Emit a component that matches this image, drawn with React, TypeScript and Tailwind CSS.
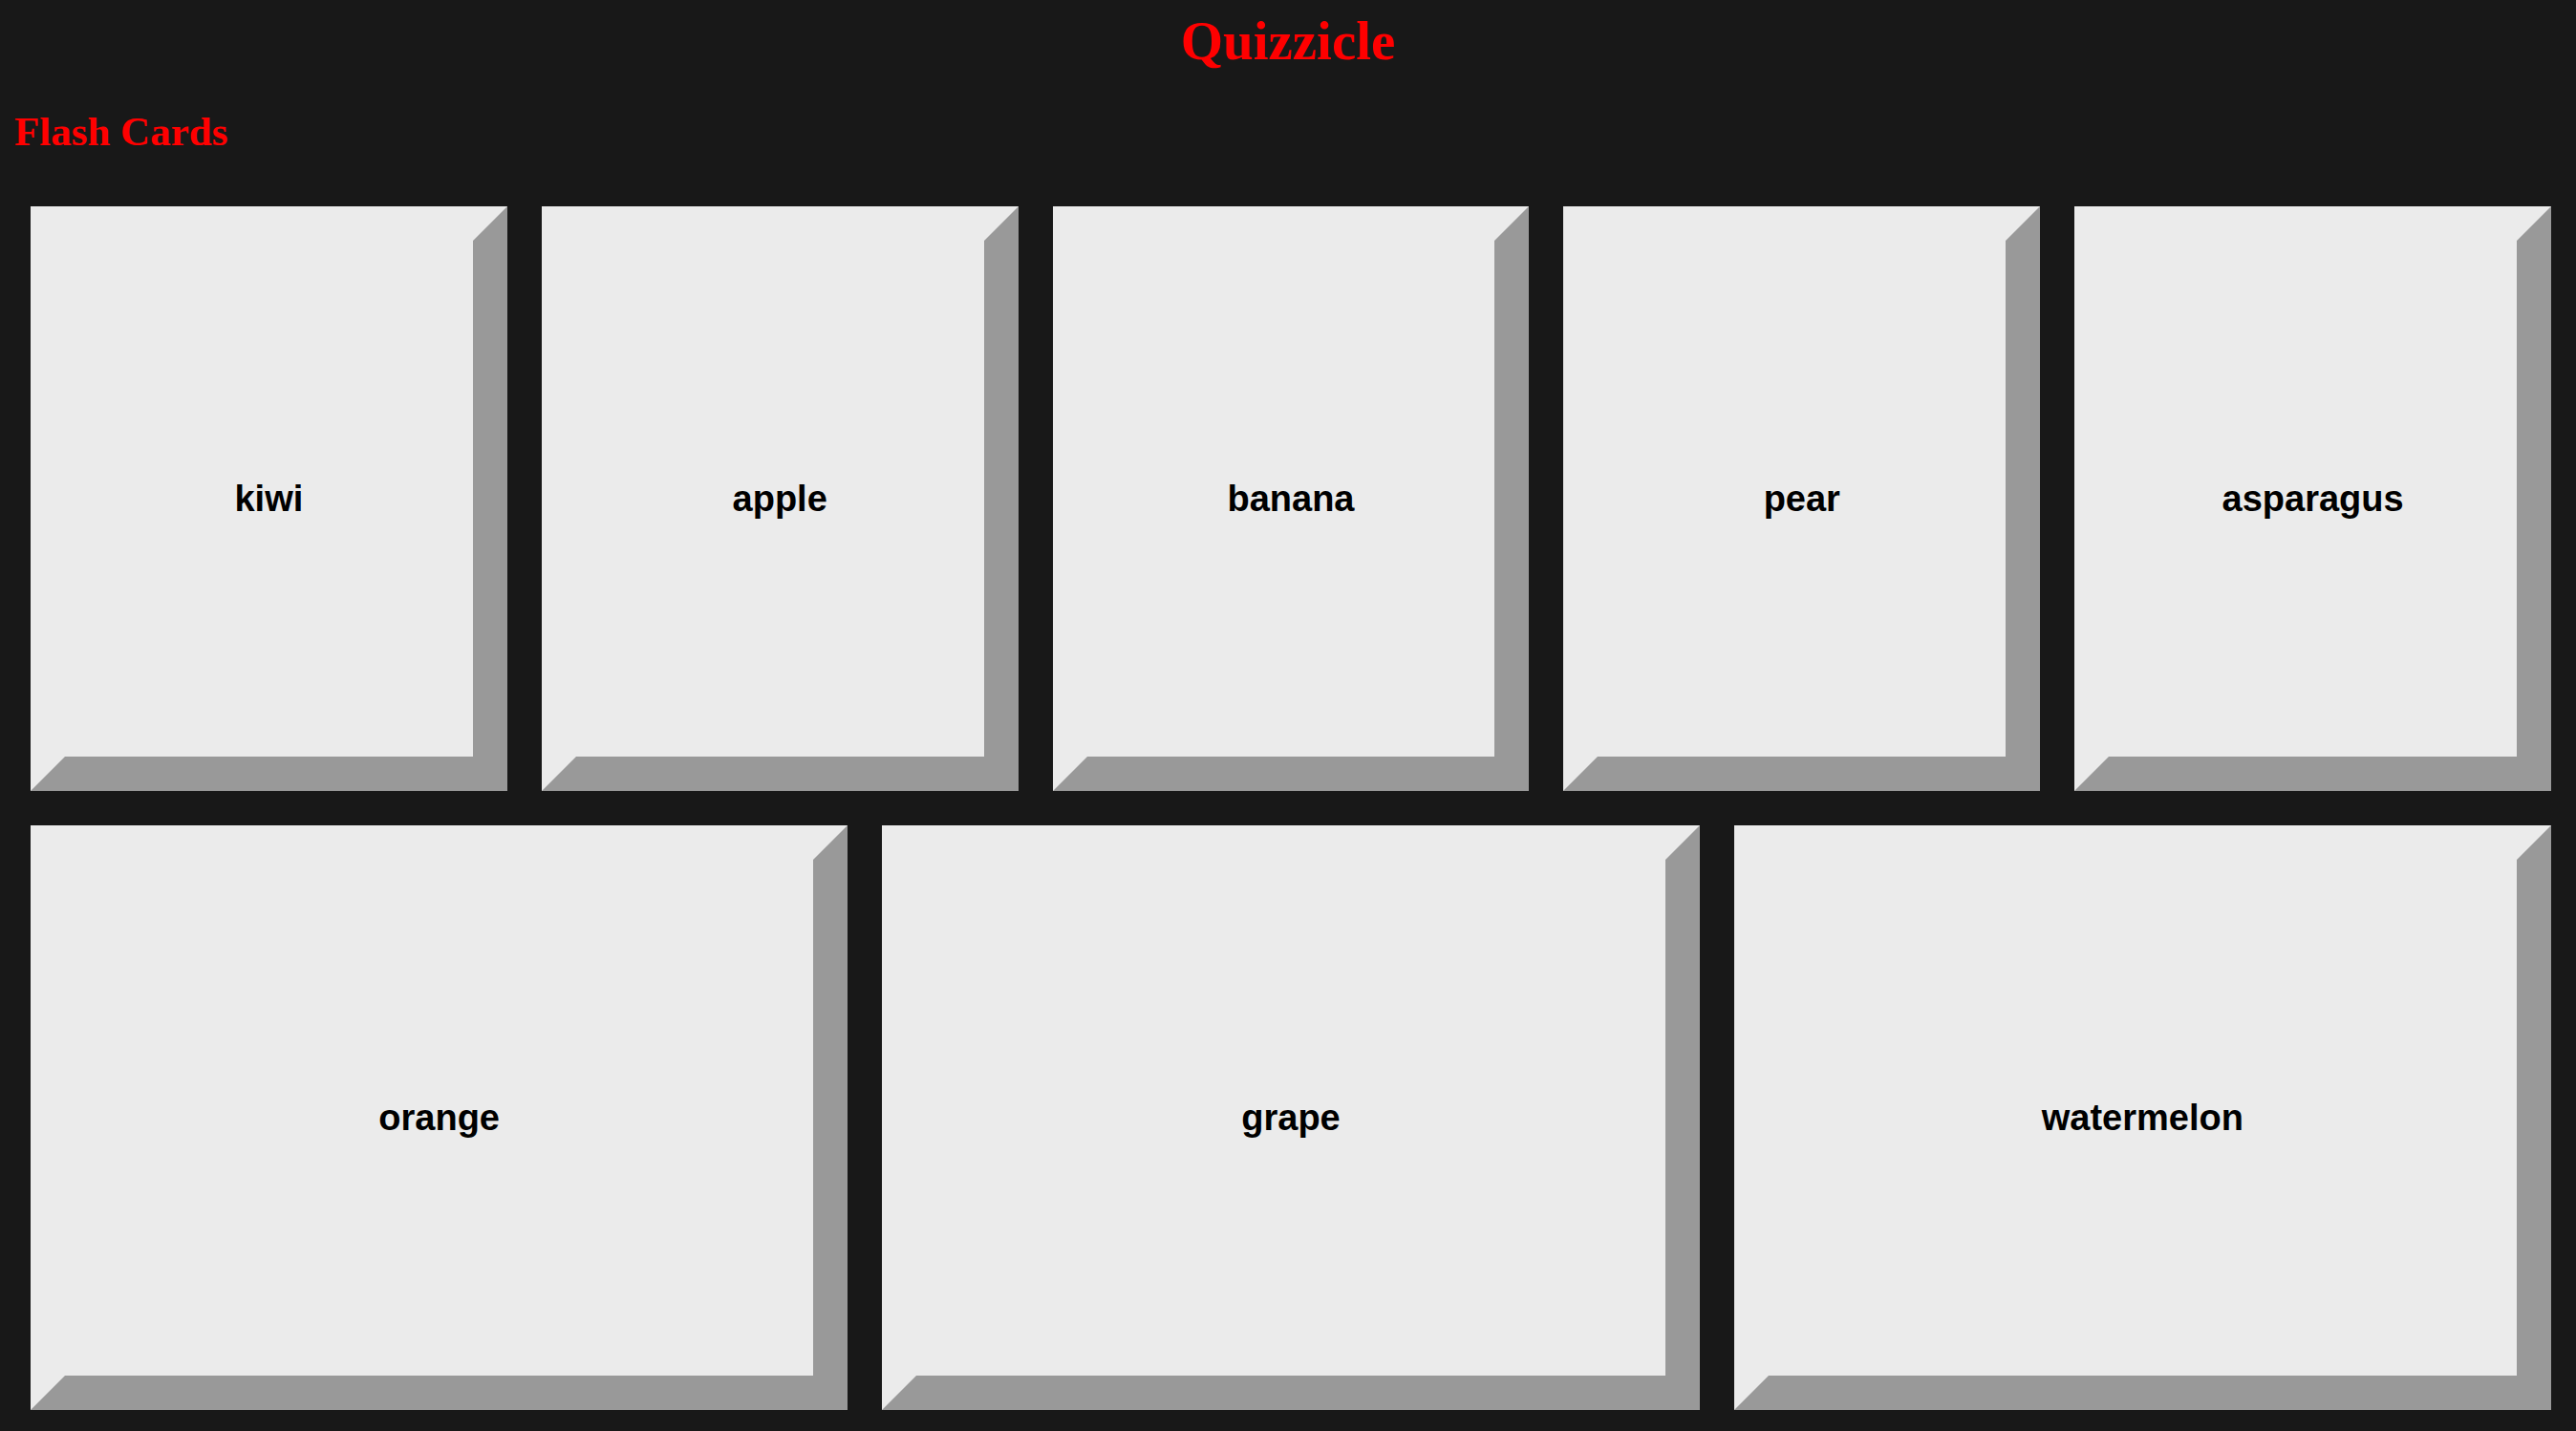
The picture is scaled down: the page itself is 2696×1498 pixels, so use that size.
import React from "react";

const row1 = ["kiwi", "apple", "banana", "pear", "asparagus"];
const row2 = ["orange", "grape", "watermelon"];

function Card({ label }: { label: string }) {
  return (
    <div className="flex-1 min-w-0 h-[612px] bg-[#ebebeb] border-[36px] border-t-[#ebebeb] border-l-[#ebebeb] border-r-[#999999] border-b-[#999999] flex items-center justify-center">
      <span className="text-[38px] font-bold text-black leading-none" style={{ fontFamily: '"Liberation Sans", Arial, sans-serif' }}>
        {label}
      </span>
    </div>
  );
}

export default function App() {
  return (
    <div className="min-h-screen bg-[#181818] pb-[22px]" style={{ fontFamily: '"Liberation Serif", "Times New Roman", serif' }}>
      <h1 className="pt-[11px] text-center text-[57px] leading-[64px] font-bold text-[#ff0000]">Quizzicle</h1>
      <h2 className="mt-[39px] pl-[15px] text-[43px] leading-[48px] font-bold text-[#ff0000]">Flash Cards</h2>
      <div className="mt-[54px] pl-[32px] pr-[26px] flex flex-col gap-[36px]">
        <div className="flex gap-[36px]">
          {row1.map((l) => (
            <Card key={l} label={l} />
          ))}
        </div>
        <div className="flex gap-[36px]">
          {row2.map((l) => (
            <Card key={l} label={l} />
          ))}
        </div>
      </div>
    </div>
  );
}
